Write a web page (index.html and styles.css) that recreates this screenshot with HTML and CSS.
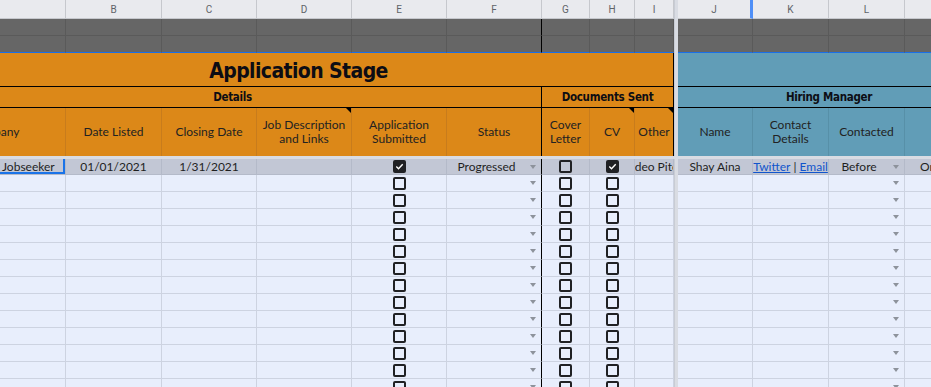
FILE: index.html
```html
<!DOCTYPE html>
<html lang="en">
<head>
    <meta charset="UTF-8">
    <title>Job Tracker - Application Stage</title>
    <link rel="stylesheet" href="styles.css">
</head>
<body>
    <div class="viewport">
        <div class="sheet" id="sheet">
            <div class="freeze-col"></div>
            <div class="freeze-row"></div>

            <!-- column letters -->
            <div class="c head"></div>
            <div class="c head">B</div>
            <div class="c head">C</div>
            <div class="c head">D</div>
            <div class="c head">E</div>
            <div class="c head">F</div>
            <div class="c head">G</div>
            <div class="c head">H</div>
            <div class="c head">I</div>
            <div class="c head head-active">J</div>
            <div class="c head">K</div>
            <div class="c head">L</div>
            <div class="c head"></div>

            <!-- hidden gray rows -->
            <div class="c gray"></div><div class="c gray"></div><div class="c gray"></div><div class="c gray"></div><div class="c gray"></div>
            <div class="c gray col-f"></div><div class="c gray"></div><div class="c gray"></div><div class="c gray"></div>
            <div class="c gray"></div><div class="c gray"></div><div class="c gray"></div><div class="c gray"></div>
            <div class="c gray last"></div><div class="c gray last"></div><div class="c gray last"></div><div class="c gray last"></div><div class="c gray last"></div>
            <div class="c gray last col-f"></div><div class="c gray last"></div><div class="c gray last"></div><div class="c gray last"></div>
            <div class="c gray last"></div><div class="c gray last"></div><div class="c gray last"></div><div class="c gray last"></div>

            <!-- title row -->
            <div class="c orange title span-9">Application Stage</div>
            <div class="c blue title span-4"></div>

            <!-- group row -->
            <div class="c orange group span-6">Details</div>
            <div class="c orange group span-3">Documents Sent</div>
            <div class="c blue group span-4">Hiring Manager</div>

            <!-- column titles -->
            <div class="c orange label">Company</div>
            <div class="c orange label">Date Listed</div>
            <div class="c orange label">Closing Date</div>
            <div class="c orange label note">Job Description<br>and Links</div>
            <div class="c orange label">Application<br>Submitted</div>
            <div class="c orange label col-f">Status</div>
            <div class="c orange label">Cover<br>Letter</div>
            <div class="c orange label note">CV</div>
            <div class="c orange label note col-i">Other</div>
            <div class="c blue label">Name</div>
            <div class="c blue label">Contact<br>Details</div>
            <div class="c blue label">Contacted</div>
            <div class="c blue label"></div>

            <!-- first entry -->
            <div class="c entry left selected">Jobseeker</div>
            <div class="c entry">01/01/2021</div>
            <div class="c entry">1/31/2021</div>
            <div class="c entry"></div>
            <div class="c entry"><span class="cb checked"></span></div>
            <div class="c entry dd col-f">Progressed</div>
            <div class="c entry"><span class="cb"></span></div>
            <div class="c entry"><span class="cb checked"></span></div>
            <div class="c entry">Video Pitch</div>
            <div class="c entry">Shay Aina</div>
            <div class="c entry"><a href="#">Twitter</a>&nbsp;|&nbsp;<a href="#">Email</a></div>
            <div class="c entry dd">Before</div>
            <div class="c entry">Ongoing</div>
        </div>
    </div>

    <script>
        const cols = ['a', 'b', 'c', 'd', 'e', 'f', 'g', 'h', 'i', 'j', 'k', 'l', 'm'];
        const checkCols = ['e', 'g', 'h'];
        const dropCols = ['f', 'l'];

        // empty rows below the first entry
        function renderRows(count) {
            const sheet = document.getElementById('sheet');
            for (let r = 0; r < count; r++) {
                cols.forEach(col => {
                    const cell = document.createElement('div');
                    cell.className = 'c row';
                    if (col === 'f') cell.classList.add('col-f');
                    if (dropCols.includes(col)) cell.classList.add('dd');
                    if (checkCols.includes(col)) cell.innerHTML = '<span class="cb"></span>';
                    sheet.appendChild(cell);
                });
            }
        }

        renderRows(13);
    </script>
</body>
</html>
```

FILE: styles.css
```css
body {
    margin: 0;
    background-color: #e8eefc;
    font-family: Lato, "Noto Sans", sans-serif;
    color: #1f1f1f;
}
.viewport {
    width: 931px;
    height: 387px;
    overflow: hidden;
}
.sheet {
    display: grid;
    width: max-content;
    margin-left: -76px;
    grid-template-columns: 142px 96px 95px 95px 95px 95px 48px 45px 39px 4px 75px 76px 76px 76px;
    grid-template-rows: 19px 17px 17px 34px 21px 48px 3px 16px;
    grid-auto-rows: 17px;
}
.freeze-col {
    grid-column: 10;
    grid-row: 1 / span 22;
    background-color: #d9dce3;
    border-left: 1px solid #c8ccd4;
}
.freeze-row {
    grid-column: 1 / -1;
    grid-row: 7;
    background-color: #d9dce3;
}
.c {
    box-sizing: border-box;
    position: relative;
    display: flex;
    align-items: center;
    justify-content: center;
    overflow: hidden;
    white-space: nowrap;
    border-right: 1px solid #cdd3e1;
    border-bottom: 1px solid #cdd3e1;
    font-size: 12px;
}
.span-9 { grid-column: span 9; }
.span-6 { grid-column: span 6; }
.span-4 { grid-column: span 4; }
.span-3 { grid-column: span 3; }

.head {
    background-color: #e9eaee;
    border-color: #c6c8cd;
    color: #5f6368;
    font-family: Roboto, Arial, sans-serif;
    font-size: 10px;
}
.head-active {
    border-right: 3px solid #4f8ff7;
}
.gray {
    background-color: #666666;
    border-color: #5a5a5a;
}
.gray.last {
    border-bottom-color: #1a6fe8;
}
.orange {
    background-color: #dc8818;
    border-right-color: #c87c1c;
    border-bottom-color: #c87c1c;
}
.blue {
    background-color: #619db7;
    border-right-color: #5790a8;
    border-bottom-color: #5790a8;
}
.title {
    border-bottom: 1px solid #000;
    padding-top: 2px;
    font-family: "DejaVu Sans Condensed", Roboto, sans-serif;
    font-weight: 700;
    font-size: 21px;
    letter-spacing: -0.6px;
    color: #0d0d14;
}
.title.orange {
    border-right: 1px solid #000;
}
.group {
    border-bottom: 1px solid #000;
    font-family: "DejaVu Sans Condensed", Roboto, sans-serif;
    font-weight: 700;
    font-size: 11.5px;
    letter-spacing: -0.3px;
    color: #0d0d14;
}
.group.orange {
    border-right: 1px solid #000;
}
.label {
    border-bottom: none;
    white-space: normal;
    text-align: center;
    line-height: 14px;
    color: #222;
}
.col-f {
    border-right: 1px solid #000 !important;
}
.col-i {
    border-right: 1px solid #000;
}
.note::after {
    content: "";
    position: absolute;
    top: 0;
    right: 0;
    border-top: 5px solid #000;
    border-left: 5px solid transparent;
}
.entry {
    background-color: #c2c7d5;
    border-color: #b4bac9;
}
.left {
    justify-content: flex-start;
    padding-left: 78px;
}
.selected {
    box-shadow: inset -2px -2px 0 #1a73e8;
}
.entry a {
    color: #1155cc;
}
.row {
    background-color: #e8eefc;
}
.dd {
    padding-right: 15px;
}
.dd::after {
    content: "";
    position: absolute;
    right: 5px;
    top: 50%;
    margin-top: -2px;
    border-top: 4px solid #8d929b;
    border-left: 3px solid transparent;
    border-right: 3px solid transparent;
}
.cb {
    box-sizing: border-box;
    display: block;
    width: 13px;
    height: 13px;
    border: 2px solid #202124;
    border-radius: 2px;
}
.cb.checked {
    background-color: #202124;
    background-image: url("data:image/svg+xml,%3Csvg xmlns='http://www.w3.org/2000/svg' viewBox='0 0 9 9'%3E%3Cpath d='M1.3 4.6l2.2 2.2 4.2-4.6' fill='none' stroke='white' stroke-width='1.4'/%3E%3C/svg%3E");
    background-size: 9px 9px;
}
```
